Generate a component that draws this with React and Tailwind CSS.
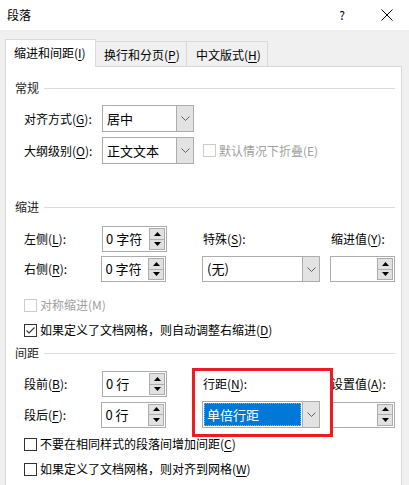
function U({ children }) {
  return <span className="underline underline-offset-2 decoration-1">{children}</span>
}

function Chevron() {
  return (
    <svg width="9" height="5" viewBox="0 0 9 5">
      <path d="M0.5 0.5 L4.5 4.5 L8.5 0.5" fill="none" stroke="#606060" strokeWidth="1" />
    </svg>
  )
}

function Triangle({ down }) {
  return (
    <svg width="7" height="4" viewBox="0 0 7 4">
      <polygon points={down ? '0,0 7,0 3.5,4' : '0,4 7,4 3.5,0'} fill="#000" />
    </svg>
  )
}

function SectionTitle({ title }) {
  return (
    <div className="flex items-center h-4">
      <span className="leading-4 text-[#1e1e1e]">{title}</span>
      <div className="flex-1 h-px bg-[#dcdcdc] ml-[5px]" />
    </div>
  )
}

function Select({ value, width, height = 'h-[27px]', highlighted }) {
  return (
    <div className={`flex ${width} ${height} border border-[#acacac] bg-white`}>
      <div className="flex-1 flex items-center p-px">
        {highlighted ? (
          <div className="w-full h-full flex items-center pl-[2px] bg-[#0078d7] text-white text-[13px] border border-dotted border-[#e0a050]">
            {value}
          </div>
        ) : (
          <span className="pl-[3px] text-[13px]">{value}</span>
        )}
      </div>
      <div className="w-[17px] bg-[#e3e3e3] border-l border-[#acacac] flex items-center justify-center">
        <Chevron />
      </div>
    </div>
  )
}

function SpinBox({ value }) {
  return (
    <div className="flex h-[26px] w-[65px] border border-[#acacac] bg-white">
      <div className="flex-1 flex items-center pl-[3px] text-[13px]">{value}</div>
      <div className="flex flex-col my-px mr-px w-[16px]">
        <div className="flex-1 bg-[#e1e1e1] border border-[#adadad] flex items-center justify-center">
          <Triangle />
        </div>
        <div className="flex-1 bg-[#e1e1e1] border border-t-0 border-[#adadad] flex items-center justify-center">
          <Triangle down />
        </div>
      </div>
    </div>
  )
}

function Checkbox({ checked, disabled, children }) {
  return (
    <div className="flex items-center h-5 gap-[3px]">
      <div
        className={`w-[13px] h-[13px] border bg-white flex items-center justify-center ${
          disabled ? 'border-[#cccccc]' : 'border-[#333333]'
        }`}
      >
        {checked && (
          <svg width="11" height="11" viewBox="0 0 11 11">
            <path d="M1.5 5.5 L4 8 L9.5 2.5" fill="none" stroke="#333" strokeWidth="1.1" />
          </svg>
        )}
      </div>
      <span className={`leading-4 ${disabled ? 'text-[#a0a0a0]' : 'text-black'}`}>{children}</span>
    </div>
  )
}

function Label({ children, width = 'w-[78px]' }) {
  return <div className={`${width} leading-4`}>{children}</div>
}

export default function App() {
  return (
    <div className="relative w-[409px] h-[485px] overflow-hidden bg-[#f0f0f0] text-[12px] text-black font-['Noto_Sans_CJK_SC',sans-serif]">

      {/* ===================== */}
      {/* TITLE BAR */}
      {/* ===================== */}
      <div className="h-[30px] bg-white flex items-center pl-[7px] pr-[16px]">
        <span className="text-[12px] leading-4 flex-1">段落</span>
        <span className="text-[12px] leading-4 mr-[36px]">?</span>
        <svg width="12" height="12" viewBox="0 0 12 12">
          <path d="M0.5 0.5 L11.5 11.5 M11.5 0.5 L0.5 11.5" stroke="#000" strokeWidth="1" />
        </svg>
      </div>

      {/* ===================== */}
      {/* TABS */}
      {/* ===================== */}
      <div className="flex items-end pt-[9px] pl-[5px] -mb-px h-[37px]">
        <div className="relative z-10 w-[91px] h-[28px] bg-white border border-b-0 border-[#d9d9d9] flex items-center pl-[8px] pb-px">
          缩进和间距(<U>I</U>)
        </div>
        <div className="w-[91px] h-[26px] border border-l-0 border-b-0 border-[#d9d9d9] flex items-center pl-[8px]">
          换行和分页(<U>P</U>)
        </div>
        <div className="w-[81px] h-[26px] border border-l-0 border-b-0 border-[#d9d9d9] flex items-center pl-[9px]">
          中文版式(<U>H</U>)
        </div>
      </div>

      {/* ===================== */}
      {/* PANEL */}
      {/* ===================== */}
      <div className="ml-[5px] w-[397px] bg-white border border-[#d9d9d9] pl-[9px] pr-[6px] pt-[13px] pb-[30px]">

        {/* 常规 */}
        <SectionTitle title="常规" />
        <div className="pl-[9px]">
          <div className="flex items-center mt-[9px]">
            <Label>对齐方式(<U>G</U>):</Label>
            <Select value="居中" width="w-[92px]" />
          </div>
          <div className="flex items-center mt-[5px]">
            <Label>大纲级别(<U>O</U>):</Label>
            <Select value="正文文本" width="w-[92px]" />
            <div className="ml-[9px]">
              <Checkbox disabled>默认情况下折叠(E)</Checkbox>
            </div>
          </div>
        </div>

        {/* 缩进 */}
        <div className="mt-[35px]">
          <SectionTitle title="缩进" />
        </div>
        <div className="pl-[9px]">
          <div className="flex items-center mt-[11px]">
            <Label>左侧(<U>L</U>):</Label>
            <SpinBox value="0 字符" />
            <div className="ml-[36px] w-[118px] leading-4">特殊(<U>S</U>):</div>
            <div className="ml-[10px] leading-4">缩进值(<U>Y</U>):</div>
          </div>
          <div className="flex items-center mt-[4px]">
            <Label>右侧(<U>R</U>):</Label>
            <SpinBox value="0 字符" />
            <div className="ml-[36px]">
              <Select value="(无)" width="w-[118px]" height="h-[26px]" />
            </div>
            <div className="ml-[10px]">
              <SpinBox value="" />
            </div>
          </div>
          <div className="mt-[13px]">
            <Checkbox disabled>对称缩进(M)</Checkbox>
          </div>
          <div className="mt-[5px]">
            <Checkbox checked>如果定义了文档网格，则自动调整右缩进(<U>D</U>)</Checkbox>
          </div>
        </div>

        {/* 间距 */}
        <div className="mt-[5px]">
          <SectionTitle title="间距" />
        </div>
        <div className="pl-[9px]">
          <div className="flex items-center mt-[10px]">
            <Label>段前(<U>B</U>):</Label>
            <SpinBox value="0 行" />
            <div className="ml-[36px] w-[118px] leading-4">行距(<U>N</U>):</div>
            <div className="ml-[10px] leading-4">设置值(<U>A</U>):</div>
          </div>
          <div className="flex items-center mt-[4px]">
            <Label>段后(<U>F</U>):</Label>
            <SpinBox value="0 行" />
            <div className="ml-[36px]">
              <Select value="单倍行距" width="w-[118px]" height="h-[27px]" highlighted />
            </div>
            <div className="ml-[10px]">
              <SpinBox value="" />
            </div>
          </div>
          <div className="mt-[6px]">
            <Checkbox>不要在相同样式的段落间增加间距(<U>C</U>)</Checkbox>
          </div>
          <div className="mt-[5px]">
            <Checkbox>如果定义了文档网格，则对齐到网格(<U>W</U>)</Checkbox>
          </div>
        </div>
      </div>

      {/* red annotation box */}
      <div className="absolute left-[192px] top-[368px] w-[141px] h-[69px] border-[3px] border-[#ec1c24] z-20 pointer-events-none" />
    </div>
  )
}
